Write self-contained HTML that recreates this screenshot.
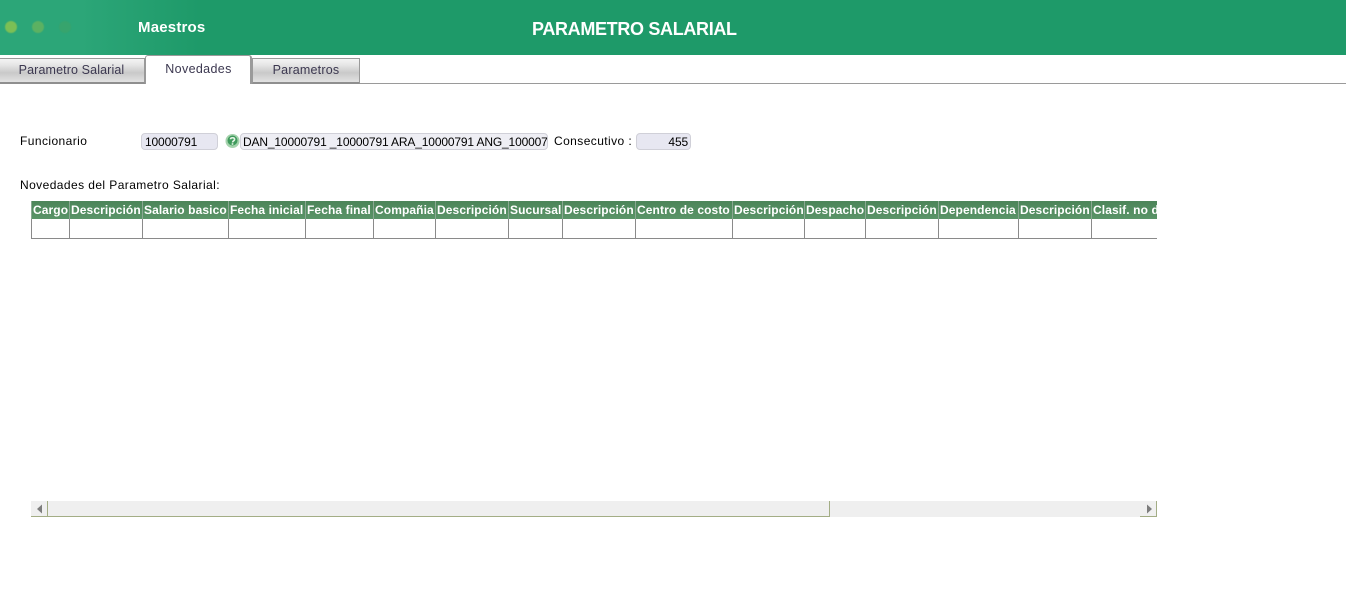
<!DOCTYPE html>
<html lang="es">
<head>
<meta charset="utf-8">
<title>Parametro Salarial</title>
<style>
html,body{margin:0;padding:0;background:#fff;width:1346px;height:589px;overflow:hidden;font-family:"Liberation Sans",sans-serif;color:#000}
.a{position:absolute;white-space:nowrap}
#hdr{left:0;top:0;width:1346px;height:55px;background:#1e9a69}
#glow{left:0;top:0;width:200px;height:55px;background:linear-gradient(90deg,#2ca678 0%,#2ca678 40%,rgba(30,154,105,0) 100%)}
.dot{width:12px;height:12px;border-radius:50%;top:21px;filter:blur(.5px)}
.tab{box-sizing:border-box;top:58px;height:26px;border:1px solid #9a9a9a;border-bottom:2px solid #8f8f8f;border-right-width:2px;background:linear-gradient(#f4f4f4 0%,#e6e6e6 25%,#c9c9c9 60%,#e2e2e2 100%);font-size:12.5px;letter-spacing:.12px;color:#3c3850;text-align:center;line-height:23px}
.lbl{font-size:12px;letter-spacing:.42px}
.inp{box-sizing:border-box;height:17px;border:1px solid #d0d0d8;border-radius:4px;background:#e7e7f1;font-size:12px;line-height:16px;overflow:hidden;letter-spacing:-.15px}
.th,.td{position:absolute;box-sizing:border-box}
.th{top:201px;height:18px;background:linear-gradient(#4c8559,#5a9468);border-left:1px solid #8aa892;color:#fff;font-weight:bold;font-size:12px;line-height:18px;padding-left:1px;white-space:nowrap;letter-spacing:.1px;overflow:hidden}
.td{top:219px;height:20px;border-left:1px solid #8a8a8a;border-bottom:1px solid #8a8a8a}
</style>
</head>
<body>
<div class="a" id="hdr"></div>
<div class="a" id="glow"></div>
<div class="a dot" style="left:5px;background:#7cbf55"></div>
<div class="a dot" style="left:32px;background:#5cb162"></div>
<div class="a dot" style="left:59px;background:#37a46d"></div>
<div class="a" style="left:138px;top:19px;color:#fff;font-weight:bold;font-size:15px;letter-spacing:.2px">Maestros</div>
<div class="a" style="left:532px;top:19px;color:#fff;font-weight:bold;font-size:18px;letter-spacing:-.33px">PARAMETRO SALARIAL</div>

<div class="a" style="left:0;top:83px;width:1346px;height:1px;background:#9a9a9a"></div>
<div class="a tab" style="left:-2px;width:148px">Parametro Salarial</div>
<div class="a tab" style="left:145px;top:55px;width:107px;height:29px;background:#fff;border-bottom:0;border-radius:3px 3px 0 0;line-height:27px;letter-spacing:.35px;padding-left:1px">Novedades</div>
<div class="a tab" style="left:252px;width:108px;border-right-width:1px;letter-spacing:.22px">Parametros</div>

<div class="a lbl" style="left:20px;top:134px">Funcionario</div>
<div class="a inp" style="left:141px;top:133px;width:77px;padding-left:3px">10000791</div>
<svg class="a" style="left:225px;top:133px" width="15" height="16" viewBox="0 0 15 16">
  <circle cx="7.5" cy="8" r="7" fill="#a5d3ad"/>
  <circle cx="7.5" cy="7.5" r="5" fill="#3f9a5c"/>
  <path d="M5.4 6.2C5.7 4.3 9.6 4.2 9.6 6.4C9.6 7.8 7.6 7.8 7.5 9.4" fill="none" stroke="#e6f4e6" stroke-width="1.6"/>
  <rect x="6.7" y="10.2" width="1.6" height="1.6" fill="#e6f4e6"/>
</svg>
<div class="a inp" style="left:240px;top:133px;width:308px;padding-left:2px;background:#eeeef4">DAN_10000791 _10000791 ARA_10000791 ANG_10000791</div>
<div class="a lbl" style="left:554px;top:134px">Consecutivo :</div>
<div class="a inp" style="left:636px;top:133px;width:55px;text-align:right;padding-right:2px">455</div>

<div class="a lbl" style="left:20px;top:178px">Novedades del Parametro Salarial:</div>

<div class="a" style="left:0;top:0;width:1157px;height:300px;overflow:hidden">
  <div class="th" style="left:31px;width:38px">Cargo</div>
  <div class="th" style="left:69px;width:73px">Descripción</div>
  <div class="th" style="left:142px;width:86px">Salario basico</div>
  <div class="th" style="left:228px;width:77px">Fecha inicial</div>
  <div class="th" style="left:305px;width:68px">Fecha final</div>
  <div class="th" style="left:373px;width:62px">Compañia</div>
  <div class="th" style="left:435px;width:73px">Descripción</div>
  <div class="th" style="left:508px;width:54px">Sucursal</div>
  <div class="th" style="left:562px;width:73px">Descripción</div>
  <div class="th" style="left:635px;width:97px">Centro de costo</div>
  <div class="th" style="left:732px;width:72px">Descripción</div>
  <div class="th" style="left:804px;width:61px">Despacho</div>
  <div class="th" style="left:865px;width:73px">Descripción</div>
  <div class="th" style="left:938px;width:80px">Dependencia</div>
  <div class="th" style="left:1018px;width:73px">Descripción</div>
  <div class="th" style="left:1091px;width:66px">Clasif. no d</div>

  <div class="td" style="left:31px;width:38px"></div>
  <div class="td" style="left:69px;width:73px"></div>
  <div class="td" style="left:142px;width:86px"></div>
  <div class="td" style="left:228px;width:77px"></div>
  <div class="td" style="left:305px;width:68px"></div>
  <div class="td" style="left:373px;width:62px"></div>
  <div class="td" style="left:435px;width:73px"></div>
  <div class="td" style="left:508px;width:54px"></div>
  <div class="td" style="left:562px;width:73px"></div>
  <div class="td" style="left:635px;width:97px"></div>
  <div class="td" style="left:732px;width:72px"></div>
  <div class="td" style="left:804px;width:61px"></div>
  <div class="td" style="left:865px;width:73px"></div>
  <div class="td" style="left:938px;width:80px"></div>
  <div class="td" style="left:1018px;width:73px"></div>
  <div class="td" style="left:1091px;width:66px"></div>
</div>

<div class="a" style="left:31px;top:501px;width:1126px;height:16px;background:#efefef"></div>
<div class="a" style="left:31px;top:516px;width:799px;height:1px;background:#a3ad85"></div>
<div class="a" style="left:47px;top:501px;width:1px;height:16px;background:#a3ad85"></div>
<div class="a" style="left:829px;top:501px;width:1px;height:16px;background:#a3ad85"></div>
<div class="a" style="left:1140px;top:501px;width:17px;height:16px;box-sizing:border-box;background:#f0f0f0;border-right:1px solid #a3ad85;border-bottom:1px solid #a3ad85"></div>
<svg class="a" style="left:36px;top:504px" width="8" height="10"><path d="M6 0.5V9.5L1 5Z" fill="#7d7d7d"/></svg>
<svg class="a" style="left:1146px;top:504px" width="8" height="10"><path d="M1 0.5V9.5L6 5Z" fill="#7d7d7d"/></svg>
</body>
</html>
